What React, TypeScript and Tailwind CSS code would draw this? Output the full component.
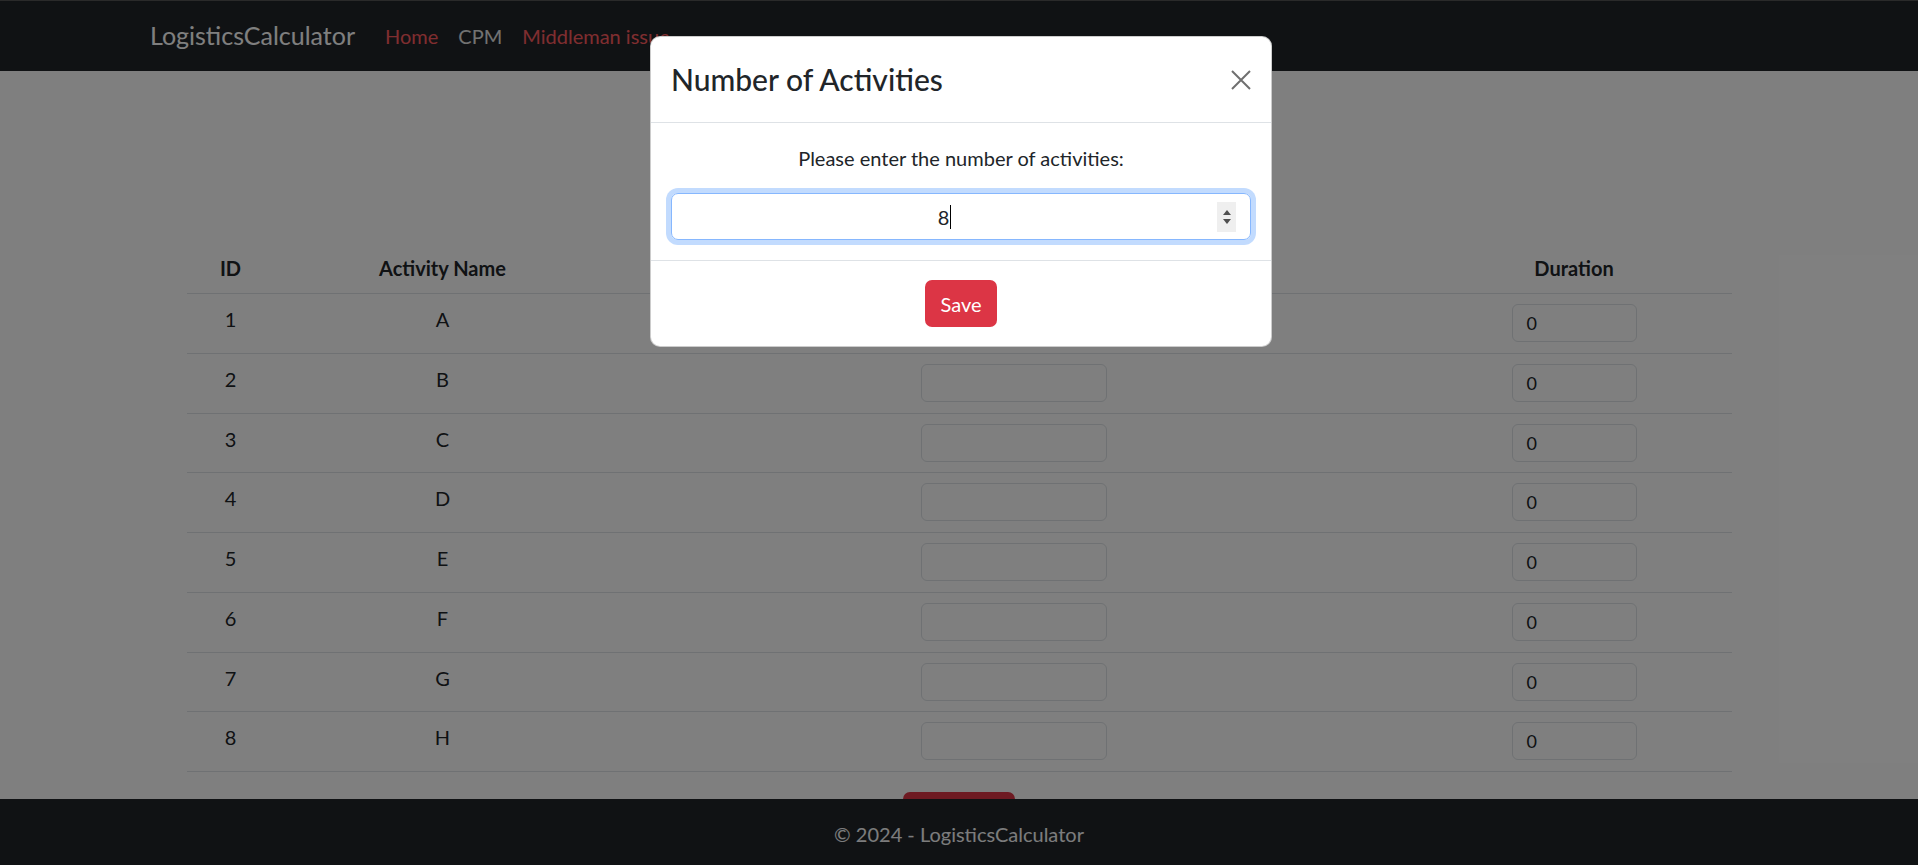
const activities = ["A", "B", "C", "D", "E", "F", "G", "H"];

function Row({ id, name }: { id: number; name: string }) {
  return (
    <div className="flex h-[59.75px] border-b border-[#dee2e6] text-[20px] leading-[30px]">
      <div className="w-[88px] pt-[10px] text-center">{id}</div>
      <div className="w-[336px] pt-[10px] text-center">{name}</div>
      <div className="flex w-[806px] justify-center pt-[10px]">
        <div className="h-[38px] w-[186px] rounded-[6px] border border-[#dee2e6] bg-white" />
      </div>
      <div className="flex w-[315px] justify-center pt-[10px]">
        <div className="flex h-[38px] w-[125px] items-center rounded-[6px] border border-[#dee2e6] bg-white px-[14px] text-[18px]">
          0
        </div>
      </div>
    </div>
  );
}

export default function App() {
  return (
    <div className="relative h-[865px] w-full overflow-hidden bg-white font-['Lato',sans-serif] text-[#212529]">
      <div className="flex h-full flex-col">
        <nav className="h-[71px] shrink-0 border-t border-[#555] bg-[#212529]">
          <div className="flex h-full items-center pl-[150px]">
            <span className="mr-[20px] text-[25px] text-white">LogisticsCalculator</span>
            <a className="px-[10px] text-[20px] text-[#ff5c60]">Home</a>
            <a className="px-[10px] text-[20px] text-[#e4e4e4]">CPM</a>
            <a className="px-[10px] text-[20px] text-[#ff5c60]">Middleman issue</a>
          </div>
        </nav>

        <main className="flex-1 overflow-hidden pt-[172px]">
          <div className="mx-auto w-[1545px]">
            <div className="flex h-[51px] border-b border-[#dee2e6] text-[20px] font-bold leading-[30px]">
              <div className="w-[88px] pt-[10px] text-center">ID</div>
              <div className="w-[336px] pt-[10px] text-center">Activity Name</div>
              <div className="w-[806px] pt-[10px] text-center">Predecessors</div>
              <div className="w-[315px] pt-[10px] text-center">Duration</div>
            </div>
            {activities.map((a, i) => (
              <Row key={a} id={i + 1} name={a} />
            ))}
          </div>
          <div className="mt-[20px] flex justify-center">
            <button aria-label="Calculate" className="h-[47px] w-[112px] rounded-[7px] bg-[#dc3545]" />
          </div>
        </main>

        <footer className="flex h-[66px] shrink-0 items-center justify-center bg-[#212529] pt-[4px] text-[20px] text-[#f8f9fa]">
          © 2024 - LogisticsCalculator
        </footer>
      </div>

      {/* modal backdrop */}
      <div className="absolute inset-0 bg-black/50" />

      <div className="absolute left-[650px] top-[36px] w-[622px] rounded-[10px] border border-black/20 bg-white">
        <div className="flex h-[86px] items-center justify-between border-b border-[#dee2e6] px-[20px]">
          <h4 className="text-[30px] font-medium leading-[45px]">Number of Activities</h4>
          <button className="h-[20px] w-[20px] text-[#6f6f6f]">
            <svg viewBox="0 0 20 20" className="h-[20px] w-[20px]" stroke="currentColor" strokeWidth="2">
              <path d="M1 1L19 19M19 1L1 19" />
            </svg>
          </button>
        </div>
        <div className="p-[20px]">
          <p className="text-center text-[20px] leading-[30px]">Please enter the number of activities:</p>
          <div className="mt-[20px] flex h-[47px] items-center rounded-[7px] border border-[#86b7fe] pr-[14px] shadow-[0_0_0_5px_rgba(13,110,253,0.25)]">
            <div className="flex flex-1 items-center justify-center text-[20px]">
              8<span className="ml-px h-[24px] w-px bg-black" />
            </div>
            <div className="flex h-[30px] w-[19px] flex-col items-center justify-center gap-[4px] bg-[#efefef]">
              <span className="h-0 w-0 border-x-[4px] border-b-[5px] border-x-transparent border-b-[#505050]" />
              <span className="h-0 w-0 border-x-[4px] border-t-[5px] border-x-transparent border-t-[#505050]" />
            </div>
          </div>
        </div>
        <div className="flex justify-center border-t border-[#dee2e6] p-[19px]">
          <button className="h-[47px] rounded-[7px] bg-[#dc3545] px-[15px] text-[20px] text-white">Save</button>
        </div>
      </div>
    </div>
  );
}
